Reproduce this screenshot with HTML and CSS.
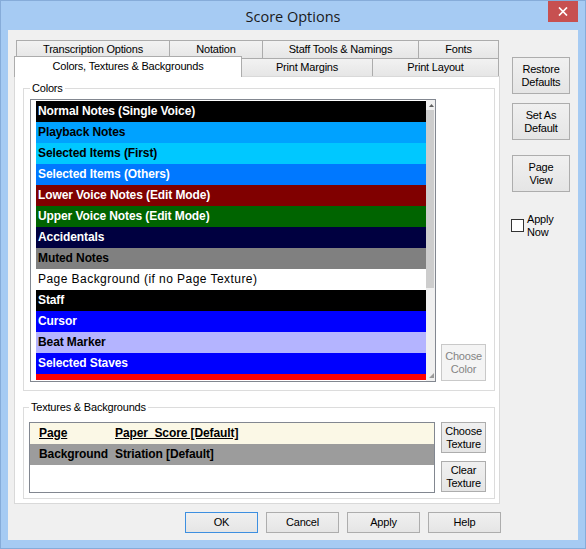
FILE: index.html
```html
<!DOCTYPE html>
<html lang="en">
  <head>
    <meta charset="utf-8">
    <meta name="viewport" content="width=device-width, initial-scale=1">
    <link rel="stylesheet" href="styles.css">

    <title>Score Options</title>
  </head>

  <body>
    <div class="windowDiv">
      <div class="titleBar">
        <span class="titleText">Score Options</span>
        <div class="closeButton">
          <svg width="10" height="9" viewBox="0 0 10 9">
            <path d="M1 0.5L9 8.5M9 0.5L1 8.5" stroke="#fff" stroke-width="1.7"/>
          </svg>
        </div>
      </div>

      <div class="clientDiv">
        <div class="mainRow">
          <div class="tabControl">
            <div class="tabRow backRow">
              <div class="tab tabTranscription">Transcription Options</div>
              <div class="tab tabNotation">Notation</div>
              <div class="tab tabStaff">Staff Tools &amp; Namings</div>
              <div class="tab tabFonts">Fonts</div>
            </div>
            <div class="tabRow frontRow">
              <div class="tab selectedTab">Colors, Textures &amp; Backgrounds</div>
              <div class="tab tabMargins">Print Margins</div>
              <div class="tab tabLayout">Print Layout</div>
            </div>

            <div class="tabPanel">
              <!-- COLORS ------------------------------------------------------->
              <fieldset class="groupBox colorsGroup">
                <legend>Colors</legend>
                <div class="colorsBody">
                  <div class="colorList">
                    <div class="colorRows">
                      <div class="colorRow rowNormal">Normal Notes (Single Voice)</div>
                      <div class="colorRow rowPlayback">Playback Notes</div>
                      <div class="colorRow rowFirst">Selected Items (First)</div>
                      <div class="colorRow rowOthers">Selected Items (Others)</div>
                      <div class="colorRow rowLower">Lower Voice Notes (Edit Mode)</div>
                      <div class="colorRow rowUpper">Upper Voice Notes (Edit Mode)</div>
                      <div class="colorRow rowAccidentals">Accidentals</div>
                      <div class="colorRow rowMuted">Muted Notes</div>
                      <div class="colorRow rowPage">Page Background (if no Page Texture)</div>
                      <div class="colorRow rowStaff">Staff</div>
                      <div class="colorRow rowCursor">Cursor</div>
                      <div class="colorRow rowBeat">Beat Marker</div>
                      <div class="colorRow rowStaves">Selected Staves</div>
                      <div class="colorRow rowRed"></div>
                    </div>
                    <div class="scrollBar">
                      <div class="scrollArrow">
                        <svg width="5" height="3" viewBox="0 0 5 3"><path d="M0 3L2.5 0L5 3Z" fill="#606060"/></svg>
                      </div>
                      <div class="scrollThumb"></div>
                      <div class="sizeGrip">
                        <svg width="5" height="5" viewBox="0 0 5 5"><path d="M5 0V5H0Z" fill="#9a9a9a"/></svg>
                      </div>
                    </div>
                  </div>
                  <button class="winButton chooseColor" disabled>Choose<br>Color</button>
                </div>
              </fieldset>

              <!-- TEXTURES ----------------------------------------------------->
              <fieldset class="groupBox texturesGroup">
                <legend>Textures &amp; Backgrounds</legend>
                <div class="texturesBody">
                  <div class="textureList">
                    <div class="textureRow textureHeader">
                      <span class="textureCol">Page</span>
                      <span>Paper_Score [Default]</span>
                    </div>
                    <div class="textureRow textureGray">
                      <span class="textureCol">Background</span>
                      <span>Striation [Default]</span>
                    </div>
                  </div>
                  <div class="textureButtons">
                    <button class="winButton textureButton">Choose<br>Texture</button>
                    <button class="winButton textureButton">Clear<br>Texture</button>
                  </div>
                </div>
              </fieldset>
            </div>
          </div>

          <div class="sidePanel">
            <button class="winButton sideButton restoreButton">Restore<br>Defaults</button>
            <button class="winButton sideButton">Set As<br>Default</button>
            <button class="winButton sideButton pageViewButton">Page<br>View</button>
            <label class="applyNow">
              <span class="checkBox"></span>
              <span>Apply<br>Now</span>
            </label>
          </div>
        </div>

        <div class="footerRow">
          <button class="winButton footerButton defaultButton">OK</button>
          <button class="winButton footerButton">Cancel</button>
          <button class="winButton footerButton">Apply</button>
          <button class="winButton footerButton">Help</button>
        </div>
      </div>
    </div>
  </body>
</html>
```

FILE: styles.css
```css
* {box-sizing: border-box;}

body {
  margin: 0;
  font-family: "Liberation Sans", Arial, sans-serif;
  font-size: 11px;
  color: #000;
}

.windowDiv {
  width: 586px;
  height: 549px;
  background-color: #a6cbf3;
  border: 1px solid #86acd9;
  display: flex;
  flex-direction: column;
}

/* TITLE BAR -------------------------------------------------------------- */
.titleBar {
  height: 29px;
  position: relative;
  display: flex;
  align-items: center;
  justify-content: center;
}
.titleText {
  font-family: "Open Sans", sans-serif;
  font-size: 14.5px;
  color: #1a1a1a;
  padding-top: 1px;
}
.closeButton {
  position: absolute;
  top: 0;
  right: 7px;
  width: 30px;
  height: 21px;
  background-color: #c75050;
  display: flex;
  align-items: center;
  justify-content: center;
}

/* CLIENT AREA ------------------------------------------------------------ */
.clientDiv {
  margin: 0 7px 8px;
  height: 510px;
  background-color: #f0f0f0;
  padding: 10px 0 0 6px;
}

.mainRow {
  display: flex;
}

/* TABS ------------------------------------------------------------------- */
.tabControl {
  width: 486px;
}

.tabRow {
  display: flex;
}

.tab {
  border: 1px solid #acacac;
  border-bottom: none;
  background: linear-gradient(#f2f2f2, #e6e6e6);
  text-align: center;
  white-space: nowrap;
  letter-spacing: -0.2px;
}
.tab + .tab {
  margin-left: -1px;
}

.backRow {
  height: 18px;
  padding-left: 2px;
}
.backRow .tab {
  height: 18px;
  line-height: 17px;
}
.tabTranscription {width: 154px;}
.tabNotation {width: 94px;}
.tabStaff {width: 157px;}
.tabFonts {width: 81px;}

.frontRow {
  height: 20px;
  margin-top: -2px;
  align-items: flex-end;
  position: relative;
  z-index: 1;
}
.frontRow .tab {
  height: 18px;
  line-height: 17px;
}
.frontRow .selectedTab {
  width: 228px;
  height: 21px;
  line-height: 19px;
  margin-bottom: -1px;
  background: #fff;
}
.tabMargins {width: 132px;}
.tabLayout {width: 127px;}

.tabPanel {
  height: 428px;
  border: 1px solid #d9d9d9;
  background-color: #fff;
  padding: 5px 4px 4px 8px;
}

/* GROUP BOXES ------------------------------------------------------------ */
.groupBox {
  margin: 0;
  min-width: 0;
  border: 1px solid #dcdcdc;
}
.groupBox legend {
  padding: 0 2px;
  line-height: 13px;
  letter-spacing: -0.2px;
}

.colorsGroup {
  padding: 4px 8px 8px 6px;
}
.texturesGroup {
  margin-top: 10px;
  padding: 8px 8px 5px 5px;
}

/* COLOR LIST ------------------------------------------------------------- */
.colorsBody {
  display: flex;
  align-items: flex-end;
  gap: 5px;
}

.colorList {
  width: 406px;
  height: 283px;
  border: 1px solid #828790;
  background-color: #fff;
  padding-left: 5px;
  display: flex;
}

.colorRows {
  width: 390px;
  height: 280px;
  padding-top: 1px;
  overflow: hidden;
}

.colorRow {
  height: 21px;
  line-height: 21px;
  padding-left: 2px;
  font-size: 12px;
  font-weight: bold;
  letter-spacing: -0.1px;
  white-space: nowrap;
}
.rowNormal {background-color: #000; color: #fff;}
.rowPlayback {background-color: #00a2ff;}
.rowFirst {background-color: #00c8ff;}
.rowOthers {background-color: #0078ff; color: #fff;}
.rowLower {background-color: #800000; color: #fff;}
.rowUpper {background-color: #006400; color: #fff;}
.rowAccidentals {background-color: #000040; color: #fff;}
.rowMuted {background-color: #808080;}
.rowPage {background-color: #fff; font-weight: normal; letter-spacing: 0.45px;}
.rowStaff {background-color: #000; color: #fff;}
.rowCursor {background-color: #0000ff; color: #fff;}
.rowBeat {background-color: #b4b4ff;}
.rowStaves {background-color: #0000ff; color: #fff;}
.rowRed {background-color: #ff0000;}

.scrollBar {
  width: 9px;
  background-color: #f0f0f0;
  display: flex;
  flex-direction: column;
}
.scrollArrow {
  height: 10px;
  display: flex;
  align-items: center;
  justify-content: flex-end;
  padding-right: 1px;
}
.scrollThumb {
  height: 178px;
  margin-right: 1px;
  background-color: #cdcdcd;
}
.sizeGrip {
  margin-top: auto;
  height: 8px;
  display: flex;
  justify-content: flex-end;
  padding-right: 1px;
}

/* BUTTONS ---------------------------------------------------------------- */
.winButton {
  font-family: "Liberation Sans", Arial, sans-serif;
  font-size: 11px;
  line-height: 13px;
  letter-spacing: -0.2px;
  color: #000;
  padding: 0;
  border: 1px solid #adadad;
  background: linear-gradient(#f0f0f0, #e5e5e5);
}
.winButton:disabled {
  border-color: #c9c9c9;
  background: #f4f4f4;
  color: #848484;
}

.chooseColor {
  width: 45px;
  height: 37px;
  margin-bottom: 1px;
  flex-shrink: 0;
}

/* TEXTURE LIST ----------------------------------------------------------- */
.texturesBody {
  display: flex;
  gap: 6px;
}

.textureList {
  width: 406px;
  height: 71px;
  border: 1px solid #828790;
  background-color: #fff;
}

.textureRow {
  height: 21px;
  line-height: 21px;
  padding-left: 9px;
  display: flex;
  font-size: 12px;
  font-weight: bold;
  letter-spacing: -0.1px;
  white-space: nowrap;
}
.textureCol {
  width: 76px;
}
.textureHeader {
  background-color: #fbf8e6;
  text-decoration: underline;
}
.textureGray {
  background-color: #9c9c9c;
}

.textureButtons {
  display: flex;
  flex-direction: column;
  gap: 8px;
}
.textureButton {
  width: 45px;
  height: 31px;
}

/* SIDE PANEL ------------------------------------------------------------- */
.sidePanel {
  width: 58px;
  margin-left: 12px;
  display: flex;
  flex-direction: column;
}
.sideButton {
  width: 58px;
  height: 37px;
  margin-top: 9px;
}
.restoreButton {
  margin-top: 17px;
}
.pageViewButton {
  margin-top: 15px;
}

.applyNow {
  margin-top: 21px;
  margin-left: -1px;
  display: flex;
  align-items: flex-start;
  line-height: 13px;
  letter-spacing: -0.2px;
}
.checkBox {
  width: 13px;
  height: 13px;
  margin-top: 6px;
  margin-right: 3px;
  border: 1px solid #333;
  background-color: #fff;
}

/* FOOTER ----------------------------------------------------------------- */
.footerRow {
  display: flex;
  gap: 8px;
  margin-top: 8px;
  padding-left: 171px;
}
.footerButton {
  width: 73px;
  height: 21px;
}
.defaultButton {
  border-color: #3d8fe0;
}
```
